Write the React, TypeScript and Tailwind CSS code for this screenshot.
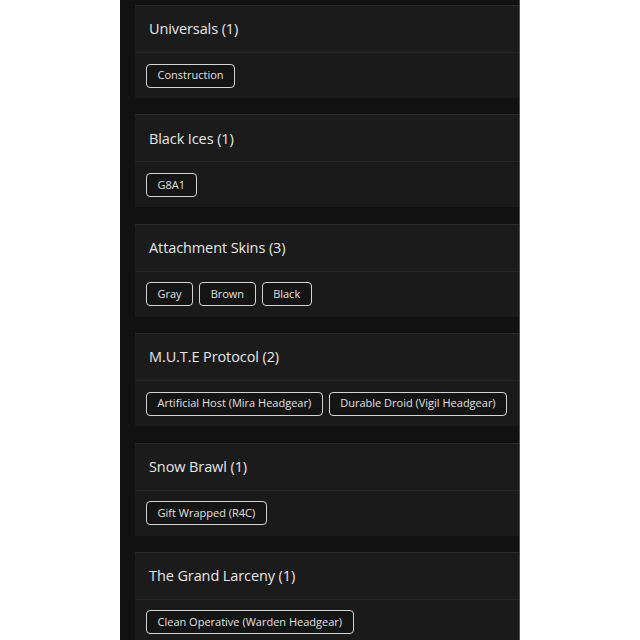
import React from "react";

const groups: { title: string; items: string[] }[] = [
  { title: "Universals (1)", items: ["Construction"] },
  { title: "Black Ices (1)", items: ["G8A1"] },
  { title: "Attachment Skins (3)", items: ["Gray", "Brown", "Black"] },
  { title: "M.U.T.E Protocol (2)", items: ["Artificial Host (Mira Headgear)", "Durable Droid (Vigil Headgear)"] },
  { title: "Snow Brawl (1)", items: ["Gift Wrapped (R4C)"] },
  { title: "The Grand Larceny (1)", items: ["Clean Operative (Warden Headgear)"] },
];

export default function App() {
  return (
    <div className="w-[640px] h-[640px] bg-white overflow-hidden" style={{ fontFamily: '"Open Sans", "Noto Sans", sans-serif' }}>
      <div className="ml-[120px] w-[400px] h-[640px] bg-[#111111] border-r border-[#555555] pt-[5px] flex flex-col gap-[16.4px] overflow-hidden">
        {groups.map((g) => (
          <div key={g.title} className="ml-[15px] bg-[#1b1b1b] border-t border-[#2a2a2a] shrink-0">
            <div className="h-[47px] flex items-center pl-[14px] border-b border-[#262626]">
              <span className="text-[14.5px] font-medium text-[#e6e6e6] tracking-[-0.1px]">{g.title}</span>
            </div>
            <div className="h-[45px] flex items-center gap-[6px] pl-[11px] bg-[#1a1a1a]">
              {g.items.map((it) => (
                <span key={it} className="h-[24px] flex items-center px-[10.5px] rounded-[4px] border-[1.5px] border-[#d4d4d4] text-[11px] text-[#e0e0e0] bg-[#141414]">
                  {it}
                </span>
              ))}
            </div>
          </div>
        ))}
      </div>
    </div>
  );
}
